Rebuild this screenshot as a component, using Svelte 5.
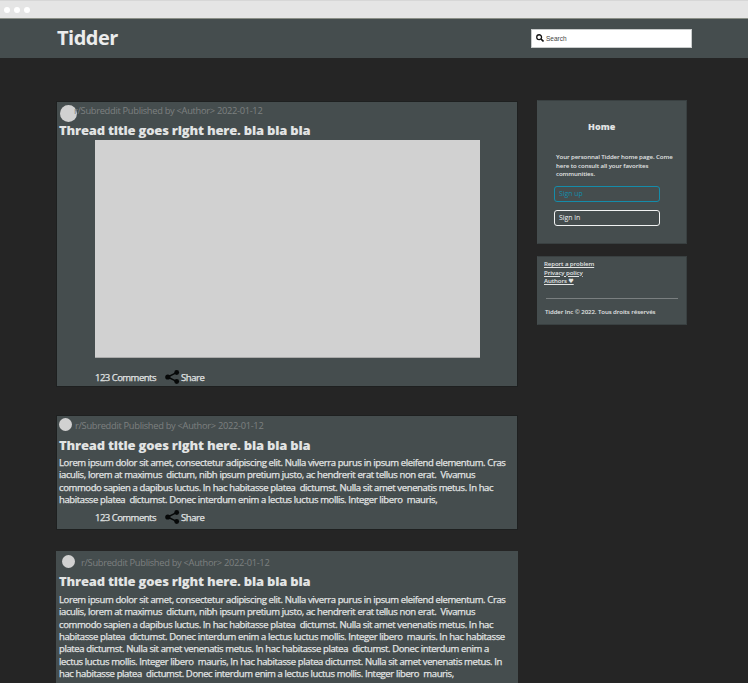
<script>
  const lorem = [
    'Lorem ipsum dolor sit amet, consectetur adipiscing elit. Nulla viverra purus in ipsum eleifend elementum. Cras',
    'iaculis, lorem at maximus  dictum, nibh ipsum pretium justo, ac hendrerit erat tellus non erat.  Vivamus',
    'commodo sapien a dapibus luctus. In hac habitasse platea  dictumst. Nulla sit amet venenatis metus. In hac'
  ];
  const posts = [
    { kind: 'media', lines: [], actions: true },
    {
      kind: 'short',
      lines: [...lorem, 'habitasse platea  dictumst. Donec interdum enim a lectus luctus mollis. Integer libero  mauris,'],
      actions: true
    },
    {
      kind: 'long',
      lines: [
        ...lorem,
        'habitasse platea  dictumst. Donec interdum enim a lectus luctus mollis. Integer libero  mauris. In hac habitasse',
        'platea dictumst. Nulla sit amet venenatis metus. In hac habitasse platea  dictumst. Donec interdum enim a',
        'lectus luctus mollis. Integer libero  mauris, In hac habitasse platea dictumst. Nulla sit amet venenatis metus. In',
        'hac habitasse platea  dictumst. Donec interdum enim a lectus luctus mollis. Integer libero  mauris,'
      ],
      actions: false
    }
  ];
</script>

<div class="page">
  <div class="chrome"><i></i><i></i><i></i></div>
  <header>
    <h1>Tidder</h1>
    <div class="search">
      <svg width="8" height="8" viewBox="0 0 16 16" fill="none" stroke="#111">
        <circle cx="6.3" cy="6.3" r="4.8" stroke-width="2.6" />
        <path d="M10 10l5 5" stroke-width="3.2" />
      </svg>
      <span>Search</span>
    </div>
  </header>
  <main>
    <section class="feed">
      {#each posts as post}
        <article class={post.kind}>
          <div class="meta">
            <span class="avatar"></span>
            <span class="by">r/Subreddit Published by &lt;Author&gt; 2022-01-12</span>
          </div>
          <h2>Thread title goes right here. bla bla bla</h2>
          {#if post.kind === 'media'}
            <div class="picture"></div>
          {/if}
          {#if post.lines.length}
            <div class="body">
              {#each post.lines as line}<p>{line}</p>{/each}
            </div>
          {/if}
          {#if post.actions}
            <div class="actions">
              <span>123 Comments</span>
              <svg width="15" height="14" viewBox="0 0 15 14">
                <path d="M12 2.4L2.6 7L12 11.6" fill="none" stroke="#060808" stroke-width="1.5" />
                <circle cx="2.8" cy="7" r="2.6" fill="#060808" />
                <circle cx="11.7" cy="2.5" r="2.4" fill="#060808" />
                <circle cx="11.7" cy="11.5" r="2.4" fill="#060808" />
              </svg>
              <span class="share">Share</span>
            </div>
          {/if}
        </article>
      {/each}
    </section>
    <aside>
      <div class="panel home">
        <h3>Home</h3>
        <div class="intro">
          <p>Your personnal Tidder home page. Come</p>
          <p>here to consult all your favorites</p>
          <p>communities.</p>
        </div>
        <div class="button up">Sign up</div>
        <div class="button in">Sign in</div>
      </div>
      <div class="panel links">
        <p><u>Report a problem</u></p>
        <p><u>Privacy policy</u></p>
        <p><u>Authors ♥</u></p>
        <hr />
        <p class="legal">Tidder Inc © 2022. Tous droits réservés</p>
      </div>
    </aside>
  </main>
</div>

<style>
  :global(body) { background: #252525; overflow: hidden; }
  * { box-sizing: border-box; margin: 0; }
  .page {
    width: 748px; height: 683px; overflow: hidden; background: #252525;
    color: #e2e4e4; font-family: "Open Sans", "DejaVu Sans", sans-serif;
  }
  .chrome {
    height: 19px; background: #e5e5e5; border-top: 1px solid #d7d7d7; border-bottom: 1px solid #8b8f87;
    display: flex; align-items: center; gap: 4px; padding-left: 4px;
  }
  .chrome i { width: 6px; height: 6px; border-radius: 50%; background: #fff; }
  header {
    height: 39px; background: #454d4e; display: flex; align-items: center;
    justify-content: space-between; padding: 0 56px 0 57px;
  }
  h1 { font-size: 20px; line-height: 36px; height: 38px; font-weight: 700; color: #ebecec; letter-spacing: -0.5px; }
  .search {
    width: 161px; height: 19px; background: #fff; border: 1px solid #c9cccc; display: flex;
    align-items: center; gap: 2px; padding-left: 4px; color: #444;
    font-family: "Liberation Sans", sans-serif; font-size: 6.5px;
  }
  .search svg { margin-top: -1px; }
  main { display: flex; align-items: flex-start; }
  .feed { width: 460px; margin-left: 57px; padding-top: 44px; flex: none; }
  article { background: #454d4e; box-shadow: 0 0 0 1px #1e2020; }
  .media { height: 284px; }
  .short { height: 113px; margin-top: 30px; }
  .long { height: 170px; margin: 22px -1px 0; box-shadow: none; }
  .meta { display: flex; color: #7d8080; font-size: 9.3px; line-height: 18px; height: 20px; padding-left: 2px; white-space: nowrap; }
  .avatar { background: #d1d1d1; border-radius: 50%; width: 13px; height: 13px; margin: 2px 3px 0 0; flex: none; }
  .media .avatar { width: 17px; height: 17px; margin: 3px -1px 0 1px; }
  .media .by { margin-left: -2px; }
  .media .meta { line-height: 17px; }
  .media h2 { height: 17px; line-height: 17px; }
  .long .avatar { margin: 4px 6px 0 4px; }
  .long .meta { height: 21px; line-height: 23px; }
  .short .meta { line-height: 19px; }
  .meta .by { letter-spacing: -0.3px; }
  h2 { font-size: 13px; line-height: 18px; height: 18px; font-weight: 800; letter-spacing: -0.2px; padding-left: 2px; white-space: nowrap; }
  .long h2 { padding-left: 3px; }
  .picture { width: 385px; height: 218px; margin: 1px 0 0 38px; background: #d1d1d1; border-bottom: 1px solid #aaa; }
  .body { padding: 3px 0 0 2px; }
  .long .body { padding: 4px 0 0 3px; }
  .body p {
    font-size: 9.5px; line-height: 12.35px; letter-spacing: -0.38px; white-space: pre;
    -webkit-text-stroke: 0.25px;
  }
  .actions {
    display: flex; align-items: center; padding-left: 38px; font-size: 9.5px; height: 14px;
    white-space: nowrap; -webkit-text-stroke: 0.25px;
  }
  .actions span { letter-spacing: -0.52px; width: 70px; }
  .actions .share { letter-spacing: -0.4px; padding-left: 1px; }
  .media .actions { margin-top: 12px; }
  .short .actions { margin-top: 4px; }
  aside { width: 150px; margin-left: 20px; padding-top: 42px; }
  .panel { background: #454d4e; border: 1px solid #394041; border-left-color: #454d4e; }
  .home { height: 144px; padding: 16px 0 0 16px; }
  h3 { font-size: 9px; line-height: 20px; font-weight: 800; padding-left: 34px; }
  .intro { padding: 16px 0 0 2px; height: 49px; }
  .intro p, .links p {
    font-size: 6.1px; line-height: 8.5px; font-weight: 600; letter-spacing: -0.09px; white-space: nowrap;
  }
  .button {
    width: 106px; height: 16px; border: 1.5px solid; border-radius: 3px; font-size: 6.9px;
    line-height: 13px; padding-left: 4px;
  }
  .up { color: #148caa; }
  .in { color: #f0f2f2; margin-top: 8px; }
  .links { margin-top: 12px; height: 69px; padding: 3px 0 0 6px; }
  .links u { text-underline-offset: 0.5px; }
  hr { border: 0; height: 1.5px; background: #7a7f80; width: 132px; margin: 12px 0 9px 2px; }
  .legal { padding-left: 1px; }
</style>
